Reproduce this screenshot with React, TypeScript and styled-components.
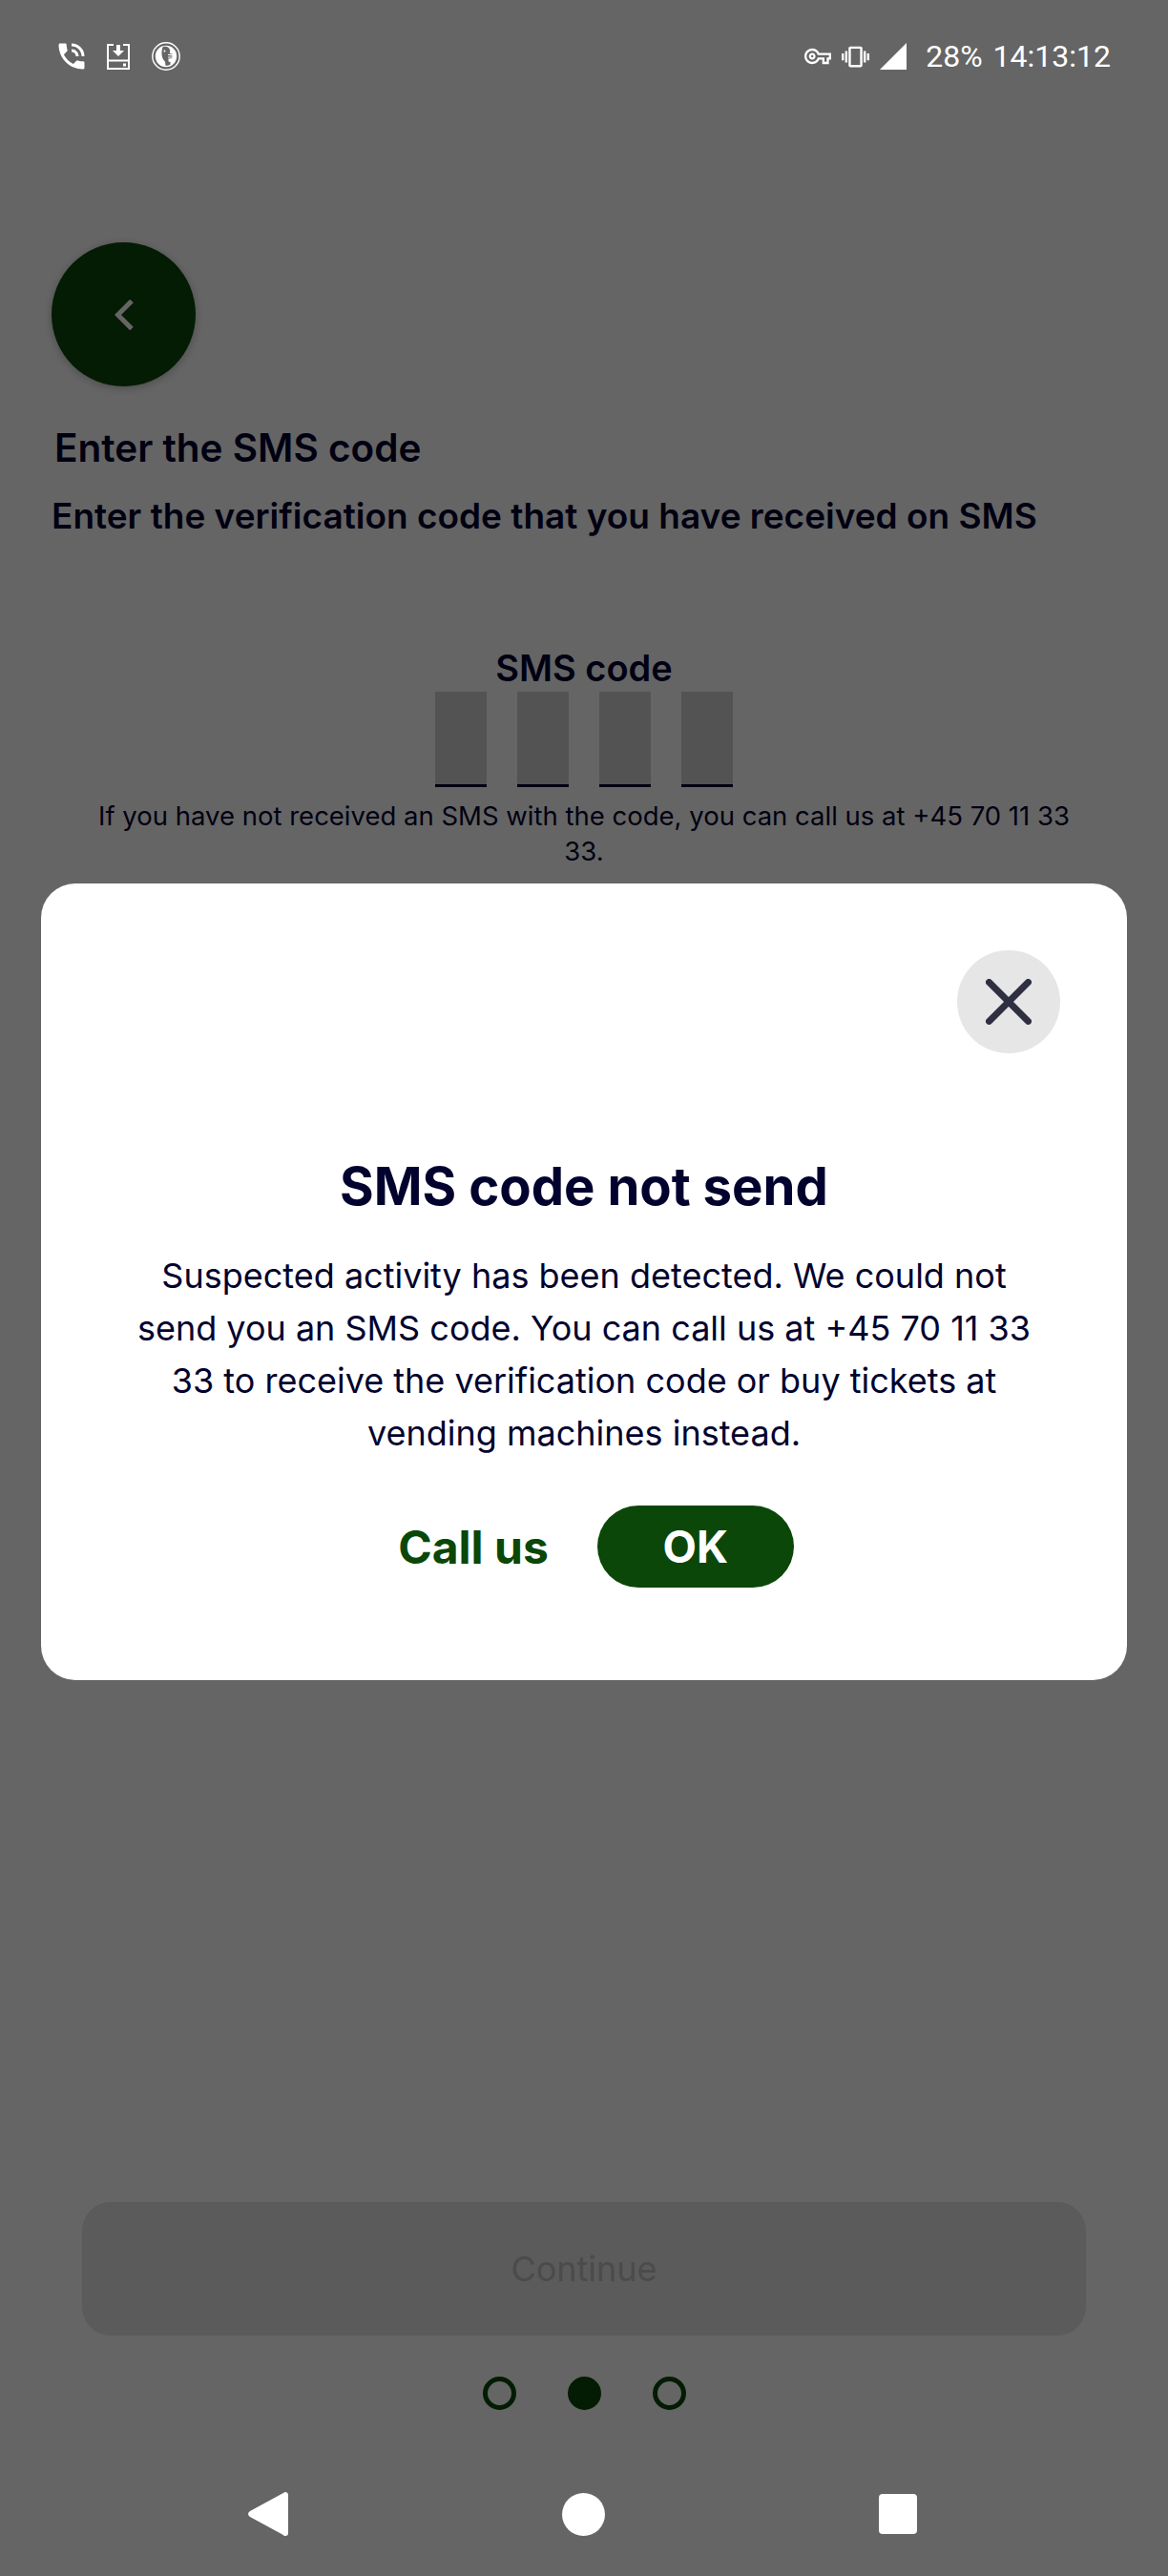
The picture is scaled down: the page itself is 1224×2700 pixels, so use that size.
import React from "react";
import styled, { createGlobalStyle } from "styled-components";
import { MdOutlineVpnKey, MdPhoneInTalk, MdVibration } from "react-icons/md";

const GlobalStyle = createGlobalStyle`
  html, body {
    margin: 0;
    padding: 0;
  }
  body {
    font-family: "Inter", "Liberation Sans", sans-serif;
  }
`;

const Screen = styled.div`
  position: relative;
  width: 1224px;
  height: 2700px;
  overflow: hidden;
  background-color: #ffffff;
  color: #02022e;
  display: flex;
  flex-direction: column;
`;

const StatusBar = styled.div`
  position: relative;
  z-index: 2;
  height: 118px;
  padding: 0 60px 0 61px;
  box-sizing: border-box;
  display: flex;
  align-items: center;
  justify-content: space-between;
  color: #ffffff;
`;

const StatusGroup = styled.div`
  display: flex;
  align-items: center;
  gap: 23px;
`;

const StatusRight = styled(StatusGroup)`
  gap: 11px;
`;

const StatusText = styled.div`
  font-family: "Roboto", sans-serif;
  font-size: 32px;
  font-weight: 400;
  word-spacing: 3px;
  margin-left: 9px;
  white-space: pre;
`;

const BackButton = styled.div`
  width: 151px;
  height: 151px;
  margin: 136px 0 0 54px;
  border-radius: 50%;
  background-color: #0a4708;
  box-shadow: 0 2px 10px rgba(0, 0, 0, 0.25);
  display: flex;
  align-items: center;
  justify-content: center;
`;

const Title = styled.div`
  margin: 41px 0 0 57px;
  font-size: 40.500px;
  line-height: 48px;
  font-weight: 600;
`;

const Subtitle = styled.div`
  margin: 23px 0 0 54px;
  font-size: 37px;
  line-height: 48px;
  font-weight: 600;
`;

const CodeSection = styled.div`
  margin-top: 113px;
  display: flex;
  flex-direction: column;
  align-items: center;
`;

const CodeLabel = styled.div`
  font-size: 38px;
  line-height: 44px;
  font-weight: 600;
`;

const CodeBoxes = styled.div`
  margin-top: 3px;
  display: flex;
  gap: 32px;
`;

const CodeBox = styled.div`
  width: 54px;
  height: 100px;
  box-sizing: border-box;
  background-color: #d2d2d2;
  border-bottom: 3px solid #02022e;
`;

const HelpText = styled.div`
  margin-top: 12px;
  width: 1040px;
  font-size: 27.500px;
  line-height: 37px;
  text-align: center;
`;

const BottomArea = styled.div`
  margin-top: auto;
  padding-bottom: 174px;
  display: flex;
  flex-direction: column;
  align-items: center;
`;

const ContinueButton = styled.div`
  width: 1052px;
  height: 140px;
  border-radius: 30px;
  background-color: #e6e6e6;
  color: #bdbdbd;
  font-size: 36px;
  display: flex;
  align-items: center;
  justify-content: center;
`;

const Dots = styled.div`
  margin-top: 43px;
  display: flex;
  gap: 54px;
`;

const Dot = styled.div<{ $active?: boolean }>`
  width: 35px;
  height: 35px;
  box-sizing: border-box;
  border-radius: 50%;
  border: 5px solid #0a4708;
  background-color: ${(p) => (p.$active ? "#0a4708" : "transparent")};
`;

const Scrim = styled.div`
  position: absolute;
  inset: 0;
  z-index: 1;
  background-color: rgba(0, 0, 0, 0.605);
  padding: 926px 43px 0;
  box-sizing: border-box;
`;

const Dialog = styled.div`
  height: 835px;
  box-sizing: border-box;
  padding: 70px 70px 0;
  border-radius: 36px;
  background-color: #ffffff;
  display: flex;
  flex-direction: column;
  align-items: center;
`;

const CloseButton = styled.div`
  align-self: flex-end;
  width: 108px;
  height: 108px;
  border-radius: 50%;
  background-color: #e6e6e6;
  display: flex;
  align-items: center;
  justify-content: center;
`;

const DialogTitle = styled.div`
  margin-top: 106px;
  font-size: 54.500px;
  line-height: 66px;
  font-weight: 700;
  color: #02022e;
`;

const DialogBody = styled.div`
  margin-top: 34px;
  width: 940px;
  font-size: 36px;
  line-height: 55px;
  text-align: center;
  color: #02022e;
`;

const DialogActions = styled.div`
  margin: 48px 0 0 25px;
  display: flex;
  align-items: center;
  gap: 51px;
`;

const CallButton = styled.div`
  font-size: 48px;
  font-weight: 700;
  color: #0a4708;
`;

const OkButton = styled.div`
  width: 206px;
  height: 86px;
  border-radius: 43px;
  background-color: #0a4708;
  color: #ffffff;
  font-size: 46px;
  font-weight: 700;
  display: flex;
  align-items: center;
  justify-content: center;
`;

const NavBar = styled.div`
  position: absolute;
  z-index: 2;
  left: 0;
  right: 0;
  bottom: 42px;
  padding: 0 263px 0 260px;
  display: flex;
  align-items: center;
  justify-content: space-between;
`;

const NavCircle = styled.div`
  width: 45px;
  height: 45px;
  border-radius: 50%;
  background-color: #ffffff;
`;

const NavSquare = styled.div`
  width: 40px;
  height: 42px;
  border-radius: 4px;
  background-color: #ffffff;
`;

const SaveIcon = () => (
  <svg width="24" height="27" viewBox="0 0 24 27" fill="none">
    <path d="M7 1H1v25h22V1h-6M1 17.5h22" stroke="#fff" strokeWidth="2" />
    <path d="M10 1h4v6h4l-6 6-6-6h4z" fill="#fff" />
    <rect x="17" y="20.5" width="3" height="3" fill="#fff" />
  </svg>
);

const DuckIcon = () => (
  <svg width="30" height="30" viewBox="0 0 30 30" fill="none">
    <circle cx="15" cy="15" r="14.2" stroke="#fff" strokeWidth="1.4" />
    <circle cx="15" cy="15" r="11.2" fill="#fff" />
    <path
      d="M12 5c3-1 6 0 7 3 .5 2 0 3-.5 4l3 .5v2h-3l3 .5v2l-4 .5v3l2 .5v2.5c-1 .8-3 1.4-5 1.2l-.5-4c-2-2-3.500-5-3.500-8 0-3 0-6 1.500-8z"
      fill="#656565"
    />
    <circle cx="13.500" cy="9.500" r="1" fill="#fff" />
    <path d="M17 13.500h5M17 16h5" stroke="#fff" strokeWidth="1" />
  </svg>
);

const SignalIcon = () => (
  <svg width="28" height="28" viewBox="0 0 28 28">
    <path d="M28 0v28H0z" fill="#fff" />
  </svg>
);

const ChevronIcon = () => (
  <svg width="20" height="32" viewBox="0 0 20 32" fill="none">
    <path d="M18 1.500L3.500 16 18 30.500" stroke="#ffffff" strokeWidth="5" />
  </svg>
);

const CloseIcon = () => (
  <svg width="48" height="48" viewBox="0 0 48 48" fill="none">
    <path
      d="M3.500 3.500l41 41M44.500 3.500l-41 41"
      stroke="#2f2f42"
      strokeWidth="7"
      strokeLinecap="round"
    />
  </svg>
);

const NavBackIcon = () => (
  <svg width="42" height="46" viewBox="0 0 42 46">
    <path
      d="M39 0c2 0 3 1.500 3 3v40c0 2-1 3-3 3-1 0-2-.5-3-1.500L2 26c-2.500-1.500-2.500-4.500 0-6L36 1.500C37 .5 38 0 39 0z"
      fill="#fff"
    />
  </svg>
);

export default function App() {
  return (
    <Screen>
      <GlobalStyle />
      <StatusBar>
        <StatusGroup>
          <MdPhoneInTalk size={36} style={{ margin: "0 -4px" }} />
          <SaveIcon />
          <DuckIcon />
        </StatusGroup>
        <StatusRight>
          <MdOutlineVpnKey size={28} />
          <MdVibration size={29} />
          <SignalIcon />
          <StatusText>28% 14:13:12</StatusText>
        </StatusRight>
      </StatusBar>

      <BackButton>
        <ChevronIcon />
      </BackButton>
      <Title>Enter the SMS code</Title>
      <Subtitle>Enter the verification code that you have received on SMS</Subtitle>

      <CodeSection>
        <CodeLabel>SMS code</CodeLabel>
        <CodeBoxes>
          <CodeBox />
          <CodeBox />
          <CodeBox />
          <CodeBox />
        </CodeBoxes>
        <HelpText>
          If you have not received an SMS with the code, you can call us at +45 70 11 33 33.
        </HelpText>
      </CodeSection>

      <BottomArea>
        <ContinueButton>Continue</ContinueButton>
        <Dots>
          <Dot />
          <Dot $active />
          <Dot />
        </Dots>
      </BottomArea>

      <Scrim>
        <Dialog>
          <CloseButton>
            <CloseIcon />
          </CloseButton>
          <DialogTitle>SMS code not send</DialogTitle>
          <DialogBody>
            Suspected activity has been detected. We could not send you an SMS code. You can call us at +45 70 11 33 33 to receive the verification code or buy tickets at vending machines instead.
          </DialogBody>
          <DialogActions>
            <CallButton>Call us</CallButton>
            <OkButton>OK</OkButton>
          </DialogActions>
        </Dialog>
      </Scrim>

      <NavBar>
        <NavBackIcon />
        <NavCircle />
        <NavSquare />
      </NavBar>
    </Screen>
  );
}
